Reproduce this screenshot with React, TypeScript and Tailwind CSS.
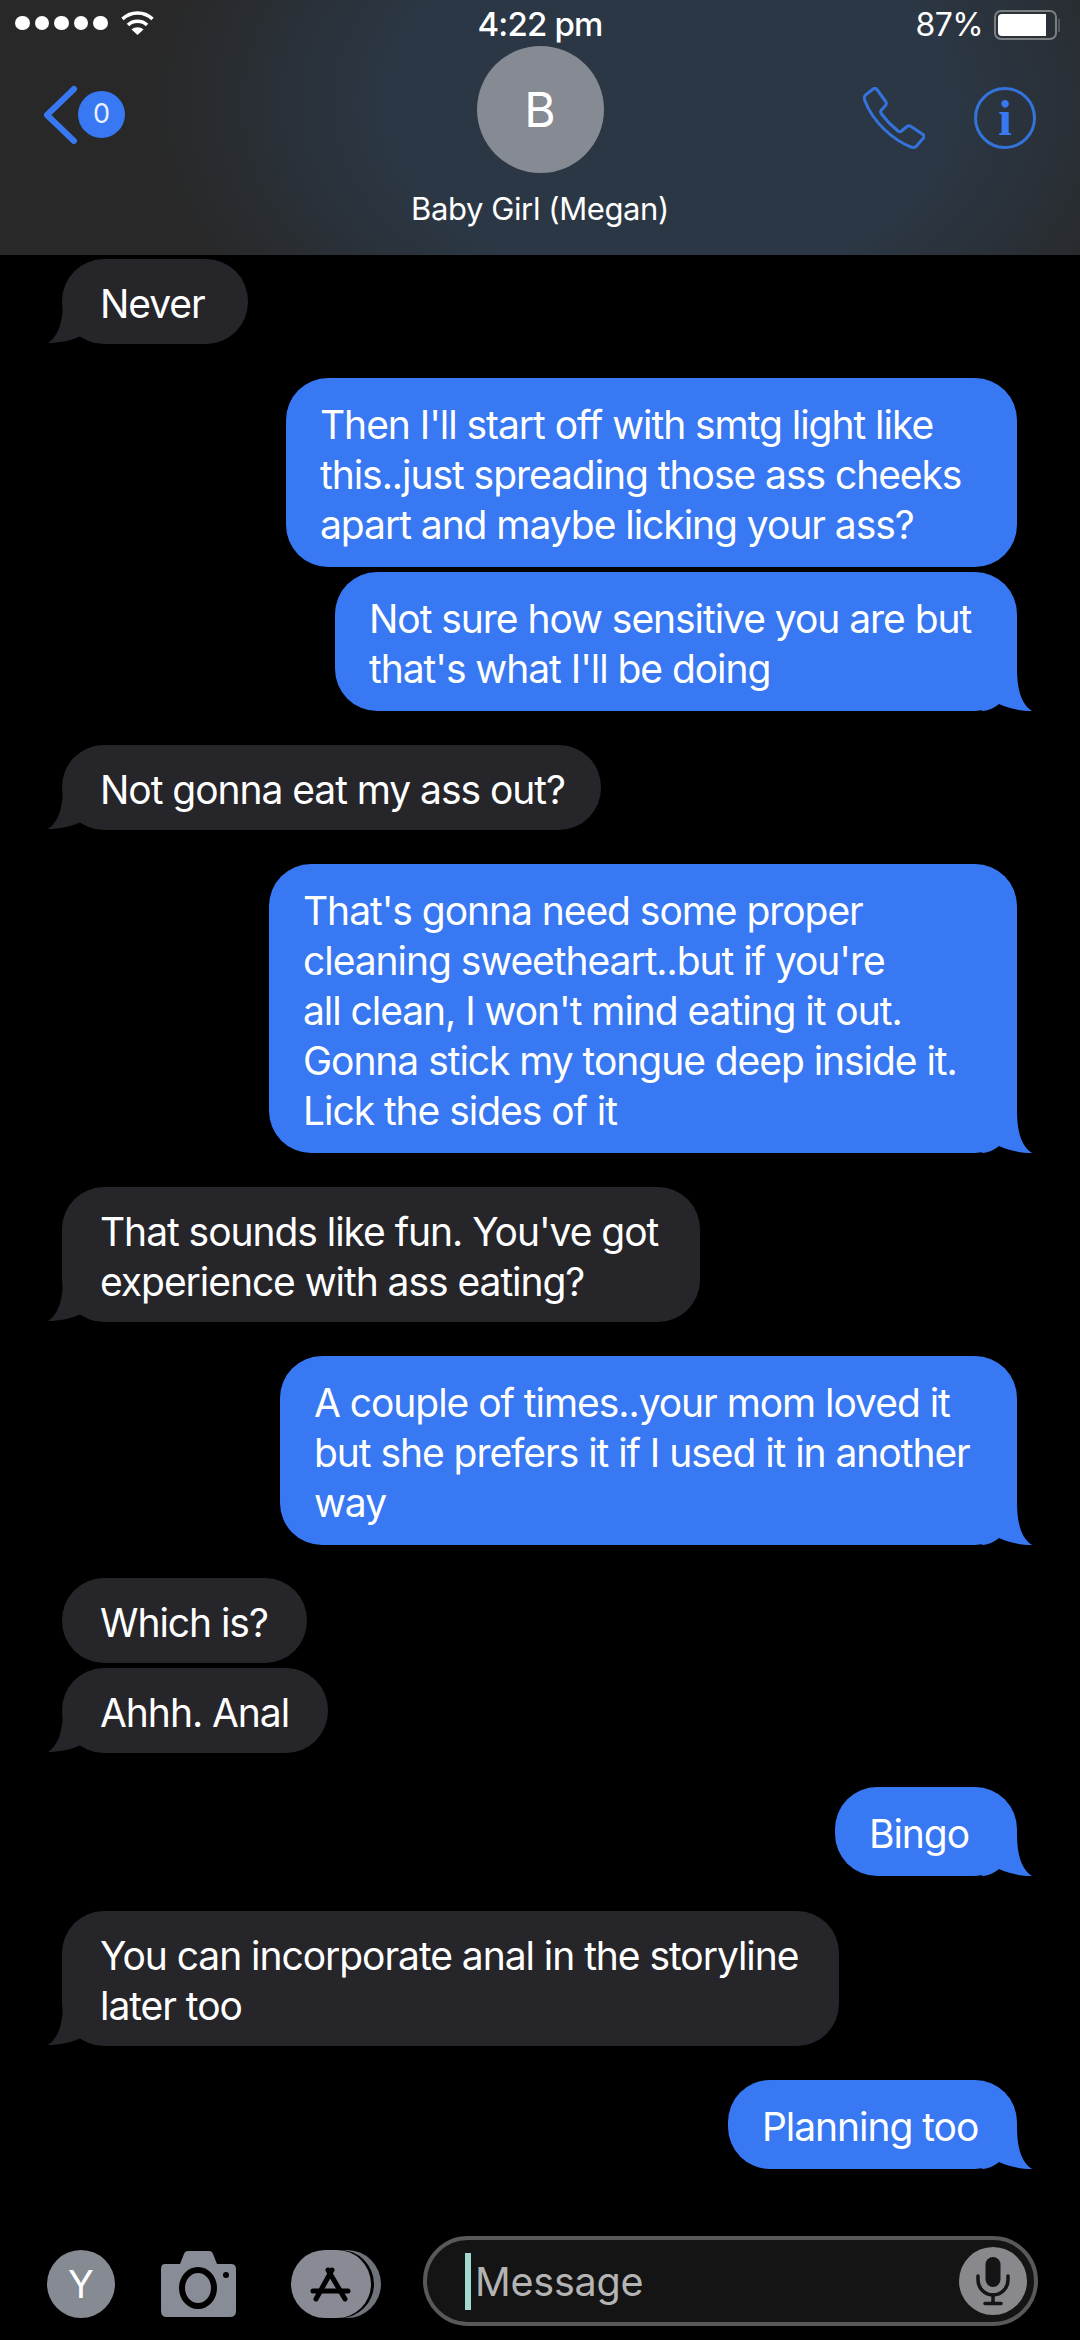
import React from 'react';

// One bubble per entry; widths are taken from the screenshot
type Message = {
  from: 'me' | 'them';
  lines: string[];
  tail?: boolean;
  size: string;
};

const messages: Message[] = [
  { from: 'them', lines: ['Never'], tail: true, size: 'mt-[4px] w-[186px]' },
  {
    from: 'me',
    lines: ["Then I'll start off with smtg light like", 'this..just spreading those ass cheeks', 'apart and maybe licking your ass?'],
    size: 'mt-[34px] w-[731px]',
  },
  {
    from: 'me',
    lines: ['Not sure how sensitive you are but', "that's what I'll be doing"],
    tail: true,
    size: 'mt-[5px] w-[682px]',
  },
  { from: 'them', lines: ['Not gonna eat my ass out?'], tail: true, size: 'mt-[34px] w-[539px]' },
  {
    from: 'me',
    lines: ["That's gonna need some proper", "cleaning sweetheart..but if you're", "all clean, I won't mind eating it out.", 'Gonna stick my tongue deep inside it.', 'Lick the sides of it'],
    tail: true,
    size: 'mt-[34px] w-[748px]',
  },
  {
    from: 'them',
    lines: ["That sounds like fun. You've got", 'experience with ass eating?'],
    tail: true,
    size: 'mt-[34px] w-[638px]',
  },
  {
    from: 'me',
    lines: ['A couple of times..your mom loved it', 'but she prefers it if I used it in another', 'way'],
    tail: true,
    size: 'mt-[34px] w-[737px]',
  },
  { from: 'them', lines: ['Which is?'], size: 'mt-[33px] w-[245px]' },
  { from: 'them', lines: ['Ahhh. Anal'], tail: true, size: 'mt-[5px] w-[266px]' },
  { from: 'me', lines: ['Bingo'], tail: true, size: 'mt-[34px] w-[182px]' },
  {
    from: 'them',
    lines: ['You can incorporate anal in the storyline', 'later too'],
    tail: true,
    size: 'mt-[35px] w-[777px]',
  },
  { from: 'me', lines: ['Planning too'], tail: true, size: 'mt-[34px] w-[289px]' },
];

const Bubble = ({ message }: { message: Message }) => {
  const mine = message.from === 'me';
  return (
    <div
      className={`relative rounded-[42px] ${message.size} ${
        mine
          ? 'self-end bg-[#3878f2] pb-[17.5px] pl-[34px] pt-[21.5px]'
          : 'self-start bg-[#26252a] pb-[15px] pl-[38px] pt-[20px]'
      }`}
    >
      {message.lines.map((line) => (
        <div key={line} className="h-[50px] whitespace-nowrap leading-[50px]">
          {line}
        </div>
      ))}
      {message.tail && mine && (
        <svg className="absolute bottom-0 right-[-15px] h-[44px] w-[50px]" viewBox="0 0 50 44">
          <path d="M0 0 H35 C35 20 38 36 50 44 C40 44 28 42 17 37 C12 41 6 44 0 44 Z" fill="#3878f2" />
        </svg>
      )}
      {message.tail && !mine && (
        <svg className="absolute bottom-[1px] left-[-14px] h-[44px] w-[50px]" viewBox="0 0 50 44">
          <path d="M50 0 H15 C15 20 12 36 0 44 C10 44 22 42 33 37 C38 41 44 44 50 44 Z" fill="#26252a" />
        </svg>
      )}
    </div>
  );
};

const StatusBar = () => (
  <div className="relative flex h-[46px] items-center justify-between pl-[15px] pr-[20px] pt-[4px]">
    <div className="flex items-center gap-[5px] pb-[4px]">
      {[0, 1, 2, 3, 4].map((dot) => (
        <span key={dot} className="h-[14.5px] w-[14.5px] rounded-full bg-white" />
      ))}
      <svg className="ml-[8px] h-[26px] w-[33px]" viewBox="0 0 33 26" fill="none" stroke="#fff" strokeWidth="3.5">
        <path d="M1.5 9 C10 1 23 1 31.5 9" />
        <path d="M7 15 C12 10 21 10 26 15" />
        <path d="M16.5 25 L10.5 19.5 C14 16.5 19 16.5 22.5 19.5 Z" fill="#fff" stroke="none" />
      </svg>
    </div>
    <div className="absolute left-0 right-0 text-center text-[33px] font-medium tracking-[-0.8px]">4:22 pm</div>
    <div className="flex items-center gap-[11px]">
      <span className="text-[32px] tracking-[-0.6px]">87%</span>
      <div className="flex items-center gap-[1px]">
        <div className="h-[30px] w-[63px] rounded-[7px] border-[2px] border-[#7c7f82] p-[2px] pr-[9px]">
          <div className="h-full rounded-l-[4px] bg-white" />
        </div>
        <span className="h-[13px] w-[2px] bg-[#55585c]" />
      </div>
    </div>
  </div>
);

const NavBar = () => (
  <div className="grid grid-cols-[1fr_127px_1fr]">
    <div className="flex items-start pl-[43px] pt-[39px]">
      <svg className="h-[60px] w-[36px]" viewBox="0 0 36 60" fill="none" stroke="#3878f2" strokeWidth="6" strokeLinecap="round" strokeLinejoin="round">
        <path d="M31 4 L4 30 L31 56" />
      </svg>
      <div className="ml-[-1px] mt-[6px] flex h-[47px] w-[47px] items-center justify-center rounded-full bg-[#3878f2] text-[27px] text-[#e8f0ff]">
        0
      </div>
    </div>
    <div className="flex flex-col items-center">
      <div className="flex h-[127px] w-[127px] shrink-0 items-center justify-center rounded-full bg-[#868a92] text-[48px]">
        B
      </div>
      <div className="mt-[16px] whitespace-nowrap text-[31px] leading-[40px] tracking-[-0.4px]">Baby Girl (Megan)</div>
    </div>
    <div className="flex items-start justify-end gap-[49px] pr-[44px] pt-[41px]">
      <svg className="h-[62px] w-[62px]" viewBox="0 0 62 62" fill="none" stroke="#3473dc" strokeWidth="3" strokeLinejoin="round">
        <path d="M9.5 2.5 C11 1 13 1 14 2.5 L23 15 Q24 17 22.5 18.5 L18 23.5 Q17 25 18.5 27 C23 33 30 40 35 44 Q37 45.5 38.5 44 L44 39.5 Q46 38 48 39.5 L60 47.5 Q62 49 60.5 51 L53 59.5 Q51 61 48 60 C30 53 10 35 2 14 Q0.5 10 2.5 8 Z" />
      </svg>
      <div className="flex h-[62px] w-[62px] items-center justify-center rounded-full border-[3px] border-[#3473dc] font-['Liberation_Serif',serif] text-[50px] font-bold leading-none text-[#3878f2]">
        i
      </div>
    </div>
  </div>
);

const Composer = () => (
  <div className="flex items-center pb-[14px] pl-[47px] pr-[42px]">
    <div className="mt-[6px] flex h-[68px] w-[68px] items-center justify-center rounded-full bg-[#868a92] text-[38px] leading-none">Y</div>
    <svg className="ml-[46px] mt-[6px] h-[66px] w-[75px]" viewBox="0 0 75 66">
      <path d="M4 13 H19 L23 3 Q24 0 27 0 H48 Q51 0 52 3 L56 13 H70 Q75 13 75 18 V60 Q75 66 69 66 H6 Q0 66 0 60 V18 Q0 13 4 13 Z" fill="#878c96" />
      <ellipse cx="37" cy="37" rx="16" ry="18" fill="none" stroke="#000" strokeWidth="6" />
      <circle cx="65" cy="24" r="3" fill="#000" />
      <circle cx="9" cy="9" r="2.5" fill="#000" />
    </svg>
    <svg className="ml-[55px] mt-[6px] h-[68px] w-[90px]" viewBox="0 0 90 68">
      <rect x="22" y="0" width="68" height="68" rx="34" fill="#6f747b" />
      <rect x="15" y="0" width="68" height="68" rx="34" fill="#000" />
      <rect x="0" y="0" width="80" height="68" rx="34" fill="#898b94" />
      <g stroke="#000" strokeWidth="5" strokeLinecap="round" fill="none">
        <path d="M41 20 L25 49" />
        <path d="M37 20 L54 49" />
        <path d="M22 41 H57" />
      </g>
    </svg>
    <div className="ml-[42px] flex h-[90px] flex-1 items-center rounded-[45px] border-[4px] border-[#595959] bg-[#141414] pl-[38px] pr-[7px]">
      <span className="mr-[4px] h-[57px] w-[6px] bg-[#a3d8d0]" />
      <span className="flex-1 pt-[3px] text-[39.5px] tracking-[-0.2px] text-[#b4b4b4]">Message</span>
      <div className="flex h-[68px] w-[68px] items-center justify-center rounded-full bg-[#88888d]">
        <svg className="h-[50px] w-[34px]" viewBox="0 0 34 50" fill="none" stroke="#141414" strokeWidth="3.5" strokeLinecap="round">
          <rect x="9.5" y="1" width="15" height="30" rx="7.5" fill="#141414" stroke="none" />
          <path d="M2 20 V24 A15 15 0 0 0 32 24 V20" />
          <path d="M17 39 V47" />
          <path d="M9 47.5 H25" />
        </svg>
      </div>
    </div>
  </div>
);

export default function App() {
  return (
    <div className="flex h-[2340px] w-[1080px] flex-col overflow-hidden bg-black font-['Inter','Liberation_Sans',sans-serif] text-white">
      <header className="h-[255px] shrink-0 bg-[radial-gradient(ellipse_520px_340px_at_62%_40%,#2b3744_55%,#282828_100%)]">
        <StatusBar />
        <NavBar />
      </header>
      <main className="flex flex-1 flex-col pl-[62px] pr-[63px] text-[39px] tracking-[-1.05px]">
        {messages.map((message, index) => (
          <Bubble key={index} message={message} />
        ))}
      </main>
      <Composer />
    </div>
  );
}
